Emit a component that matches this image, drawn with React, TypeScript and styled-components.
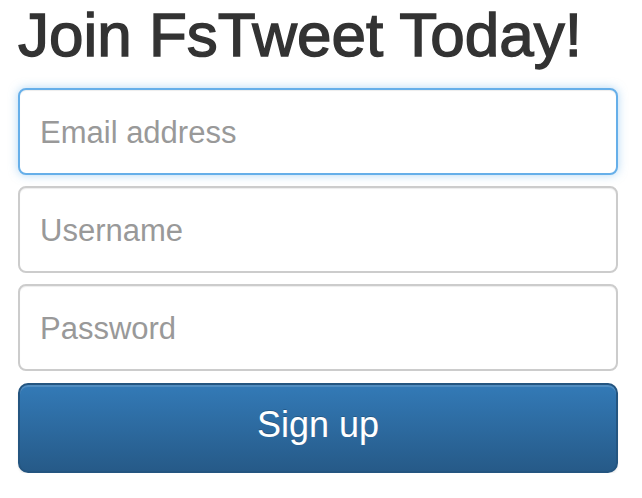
import React from "react";
import styled, { createGlobalStyle, css } from "styled-components";

const Global = createGlobalStyle`
  html, body { margin: 0; padding: 0; background: #ffffff; }
  body { font-family: "Liberation Sans", Arial, Helvetica, sans-serif; color: #333333; }
  * { box-sizing: border-box; }
`;

const Page = styled.div`
  width: 600px;
  margin-left: 18px;
  padding-top: 1px;
`;

const Title = styled.h1`
  margin: 0 0 19px 0;
  font-size: 62px;
  line-height: 68px;
  font-weight: 400;
  color: #333333;
  -webkit-text-stroke: 1.4px #333333;
`;

const Form = styled.form`
  display: flex;
  flex-direction: column;
  gap: 11px;
`;

const Field = styled.input<{ $focused?: boolean }>`
  display: block;
  width: 100%;
  height: 87px;
  padding: 2px 20px 0;
  font-family: "Liberation Sans", Arial, Helvetica, sans-serif;
  font-size: 31px;
  color: #555555;
  background: #ffffff;
  border: 2px solid #cccccc;
  border-radius: 8px;
  box-shadow: inset 0 1px 1px rgba(0, 0, 0, 0.075);
  outline: none;
  &::placeholder { color: #999999; }
  ${(p) =>
    p.$focused &&
    css`
      border-color: #66afe9;
      box-shadow: inset 0 1px 1px rgba(0, 0, 0, 0.075), 0 0 10px rgba(102, 175, 233, 0.5);
    `}
`;

const Button = styled.button`
  display: block;
  width: 100%;
  height: 90px;
  margin-top: 1px;
  font-family: "Liberation Sans", Arial, Helvetica, sans-serif;
  font-size: 36px;
  color: #ffffff;
  padding: 0 0 6px;
  background: linear-gradient(to bottom, #337ab7 0%, #265a88 100%);
  border: 2px solid #245580;
  border-radius: 10px;
  box-shadow: inset 0 2px 0 rgba(255, 255, 255, 0.15), 0 2px 2px rgba(0, 0, 0, 0.075);
  text-shadow: 0 -1px 0 rgba(0, 0, 0, 0.2);
  cursor: pointer;
`;

export default function App() {
  return (
    <>
      <Global />
      <Page>
        <Title>Join FsTweet Today!</Title>
        <Form onSubmit={(e) => e.preventDefault()}>
          <Field $focused type="email" placeholder="Email address" />
          <Field type="text" placeholder="Username" />
          <Field type="password" placeholder="Password" />
          <Button type="submit">Sign up</Button>
        </Form>
      </Page>
    </>
  );
}
